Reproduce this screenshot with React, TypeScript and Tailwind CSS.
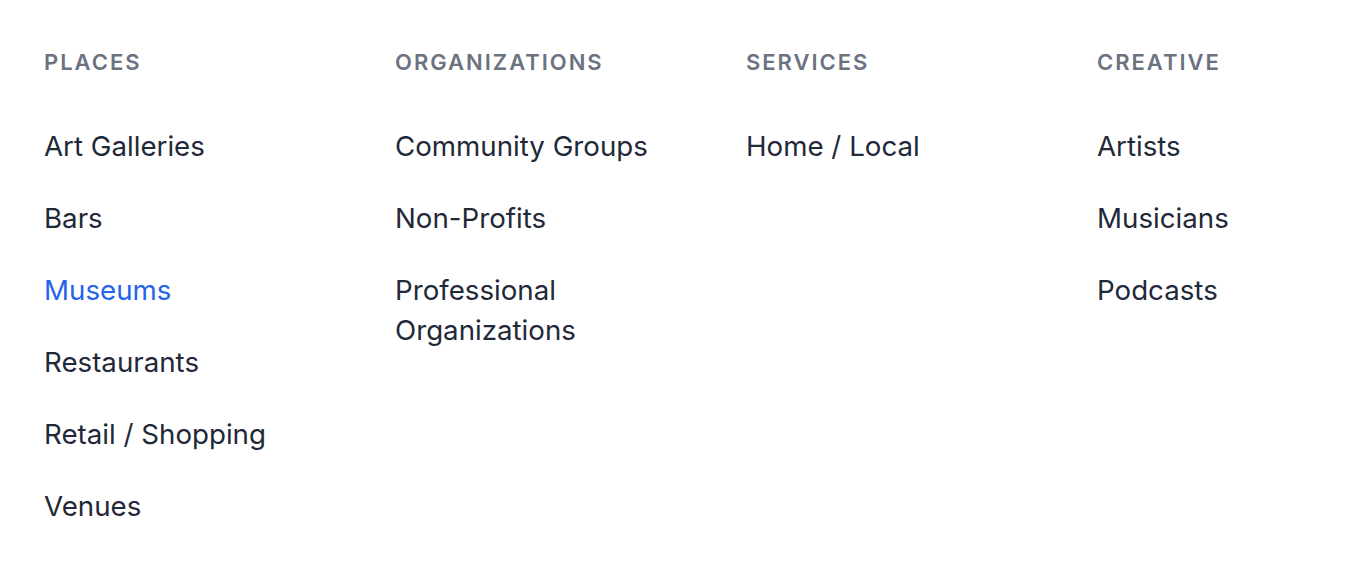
import React from 'react';

interface Category {
  title: string;
  items: string[];
}

const categories: Category[] = [
  {
    title: 'Places',
    items: ['Art Galleries', 'Bars', 'Museums', 'Restaurants', 'Retail / Shopping', 'Venues'],
  },
  {
    title: 'Organizations',
    items: ['Community Groups', 'Non-Profits', 'Professional Organizations'],
  },
  {
    title: 'Services',
    items: ['Home / Local'],
  },
  {
    title: 'Creative',
    items: ['Artists', 'Musicians', 'Podcasts'],
  },
];

const active = 'Museums';

export default function App() {
  return (
    <div className="w-full h-[566px] overflow-hidden bg-white font-['Inter',sans-serif]">
      <div className="grid grid-cols-[repeat(4,319px)] gap-x-8 pl-[44px] pt-[48px]">
        {categories.map((cat) => (
          <div key={cat.title} className="flex flex-col">
            <h3 className="text-[22px] leading-[28px] font-semibold uppercase tracking-[0.09em] text-[#6b7280]">
              {cat.title}
            </h3>
            <ul className="mt-[50px] flex flex-col gap-8">
              {cat.items.map((item) => (
                <li key={item}>
                  <a
                    href="#"
                    className={
                      item === active
                        ? 'block text-[27.7px] leading-[40px] text-[#2563eb]'
                        : 'block text-[27.7px] leading-[40px] text-[#1f2937]'
                    }
                  >
                    {item}
                  </a>
                </li>
              ))}
            </ul>
          </div>
        ))}
      </div>
    </div>
  );
}
